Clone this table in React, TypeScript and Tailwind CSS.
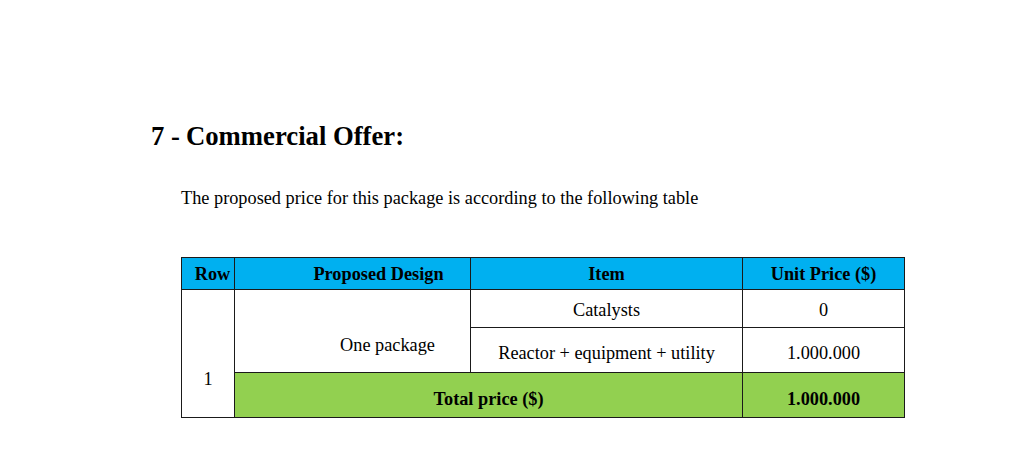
export default function App() {
  const cell = "border border-[#1a1a1a] text-center align-middle p-0"
  return (
    <div className="w-[1024px] h-[474px] bg-white text-black font-['Liberation_Serif',serif] overflow-hidden">
      <div className="pt-[120px] pl-[151px]">
        <h1 className="flex font-bold text-[26.7px] leading-[32px]">
          <span className="w-[35px]">7 -</span>
          <span>Commercial Offer:</span>
        </h1>
        <p className="mt-[35px] ml-[30px] text-[18.3px] leading-[22px]">
          The proposed price for this package is according to the following table
        </p>
        <table className="mt-[48px] ml-[30px] border-collapse text-[18.3px] leading-[20px]">
          <colgroup>
            <col className="w-[53px]" />
            <col className="w-[236px]" />
            <col className="w-[272px]" />
            <col className="w-[162px]" />
          </colgroup>
          <thead>
            <tr className="h-[32px] bg-[#00b0f0] font-bold">
              <th className={`${cell} pl-[9px]`}>Row</th>
              <th className={`${cell} pl-[52px]`}>Proposed Design</th>
              <th className={cell}>Item</th>
              <th className={cell}>Unit Price ($)</th>
            </tr>
          </thead>
          <tbody>
            <tr className="h-[38px]">
              <td rowSpan={3} className={`${cell} pt-[50px]`}>1</td>
              <td rowSpan={2} className={`${cell} pl-[70px] pt-[28px]`}>One package</td>
              <td className={`${cell} pt-[3px]`}>Catalysts</td>
              <td className={`${cell} pt-[3px]`}>0</td>
            </tr>
            <tr className="h-[45px]">
              <td className={`${cell} pt-[6px]`}>Reactor + equipment + utility</td>
              <td className={`${cell} pt-[6px]`}>1.000.000</td>
            </tr>
            <tr className="h-[45px] bg-[#92d050] font-bold">
              <td colSpan={2} className={`${cell} pt-[8px]`}>Total price ($)</td>
              <td className={`${cell} pt-[8px]`}>1.000.000</td>
            </tr>
          </tbody>
        </table>
      </div>
    </div>
  )
}
